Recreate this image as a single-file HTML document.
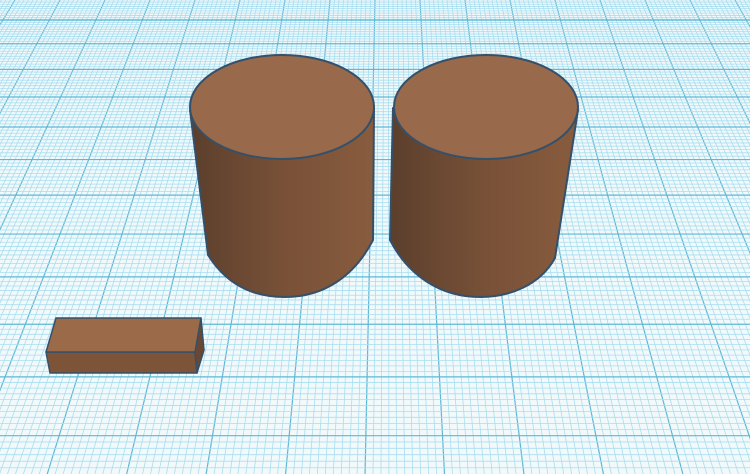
<!DOCTYPE html>
<html><head><style>html,body{margin:0;padding:0;background:#f2f9fb;overflow:hidden}svg{display:block}</style></head>
<body>
<svg id="s" width="750" height="474" viewBox="0 0 750 474" xmlns="http://www.w3.org/2000/svg">
<rect width="750" height="474" fill="#f2f9fb"/>
<g id="grid"></g>
<defs>
<linearGradient id="cyl" x1="0" x2="1" y1="0" y2="0">
<stop offset="0" stop-color="#5a3f2c"/><stop offset="0.25" stop-color="#6a4832"/><stop offset="0.55" stop-color="#7a5238"/><stop offset="1" stop-color="#885c3e"/>
</linearGradient>
</defs>
<path d="M190,110 L208,255 C230,290 260,297 285,297 C325,297 355,275 373,240 L374,107 Z" fill="url(#cyl)" stroke="#35506a" stroke-width="2" stroke-linejoin="round"/>
<ellipse cx="282" cy="107" rx="92" ry="52" fill="#98694a" stroke="#35506a" stroke-width="2"/>
<path d="M393,108 L390,240 C408,275 440,297 480,297 C510,297 540,285 555,258 L578,110 Z" fill="url(#cyl)" stroke="#35506a" stroke-width="2" stroke-linejoin="round"/>
<ellipse cx="486" cy="107" rx="92" ry="52" fill="#98694a" stroke="#35506a" stroke-width="2"/>
<polygon points="46,352 195,352 197,373 50,373" fill="#7d5438" stroke="#35506a" stroke-width="1.5" stroke-linejoin="round"/>
<polygon points="201,318 204,350 197,373 195,352" fill="#6a4731" stroke="#35506a" stroke-width="1.5" stroke-linejoin="round"/>
<polygon points="56,318 201,318 195,352 46,352" fill="#9a6a49" stroke="#35506a" stroke-width="1.5" stroke-linejoin="round"/>
</svg>
<script>
(function(){
var g=document.getElementById('grid'),h='';
var vx=388,vy=-619,step=4.5,base=510;
for(var i=-200;i<=200;i++){
 var x0=base+i*step;
 var slope=(x0-vx)/(0-vy);
 var x1=x0+slope*474;
 var m=(i%10==0);
 h+='<line x1="'+x0.toFixed(2)+'" y1="0" x2="'+x1.toFixed(2)+'" y2="474" stroke="'+(m?'#5fb8d6':'#a9def0')+'" stroke-width="'+(m?1.2:0.8)+'"/>';
}
function sp(y){var r=(y+619)/639;return 2.3*r*r;}
var ys=[],y=20,n=0;
while(y>-5){ys.push([y,n%10==0]);y-=sp(y);n++;}
y=20;n=0;
while(y<480){ys.push([y,n%10==0]);y+=sp(y);n++;}
ys.forEach(function(p){h+='<line x1="0" y1="'+p[0].toFixed(2)+'" x2="750" y2="'+p[0].toFixed(2)+'" stroke="'+(p[1]?'#5fb8d6':'#a9def0')+'" stroke-width="'+(p[1]?1.2:0.8)+'"/>';});
g.innerHTML=h;
})();
</script>
</body></html>
